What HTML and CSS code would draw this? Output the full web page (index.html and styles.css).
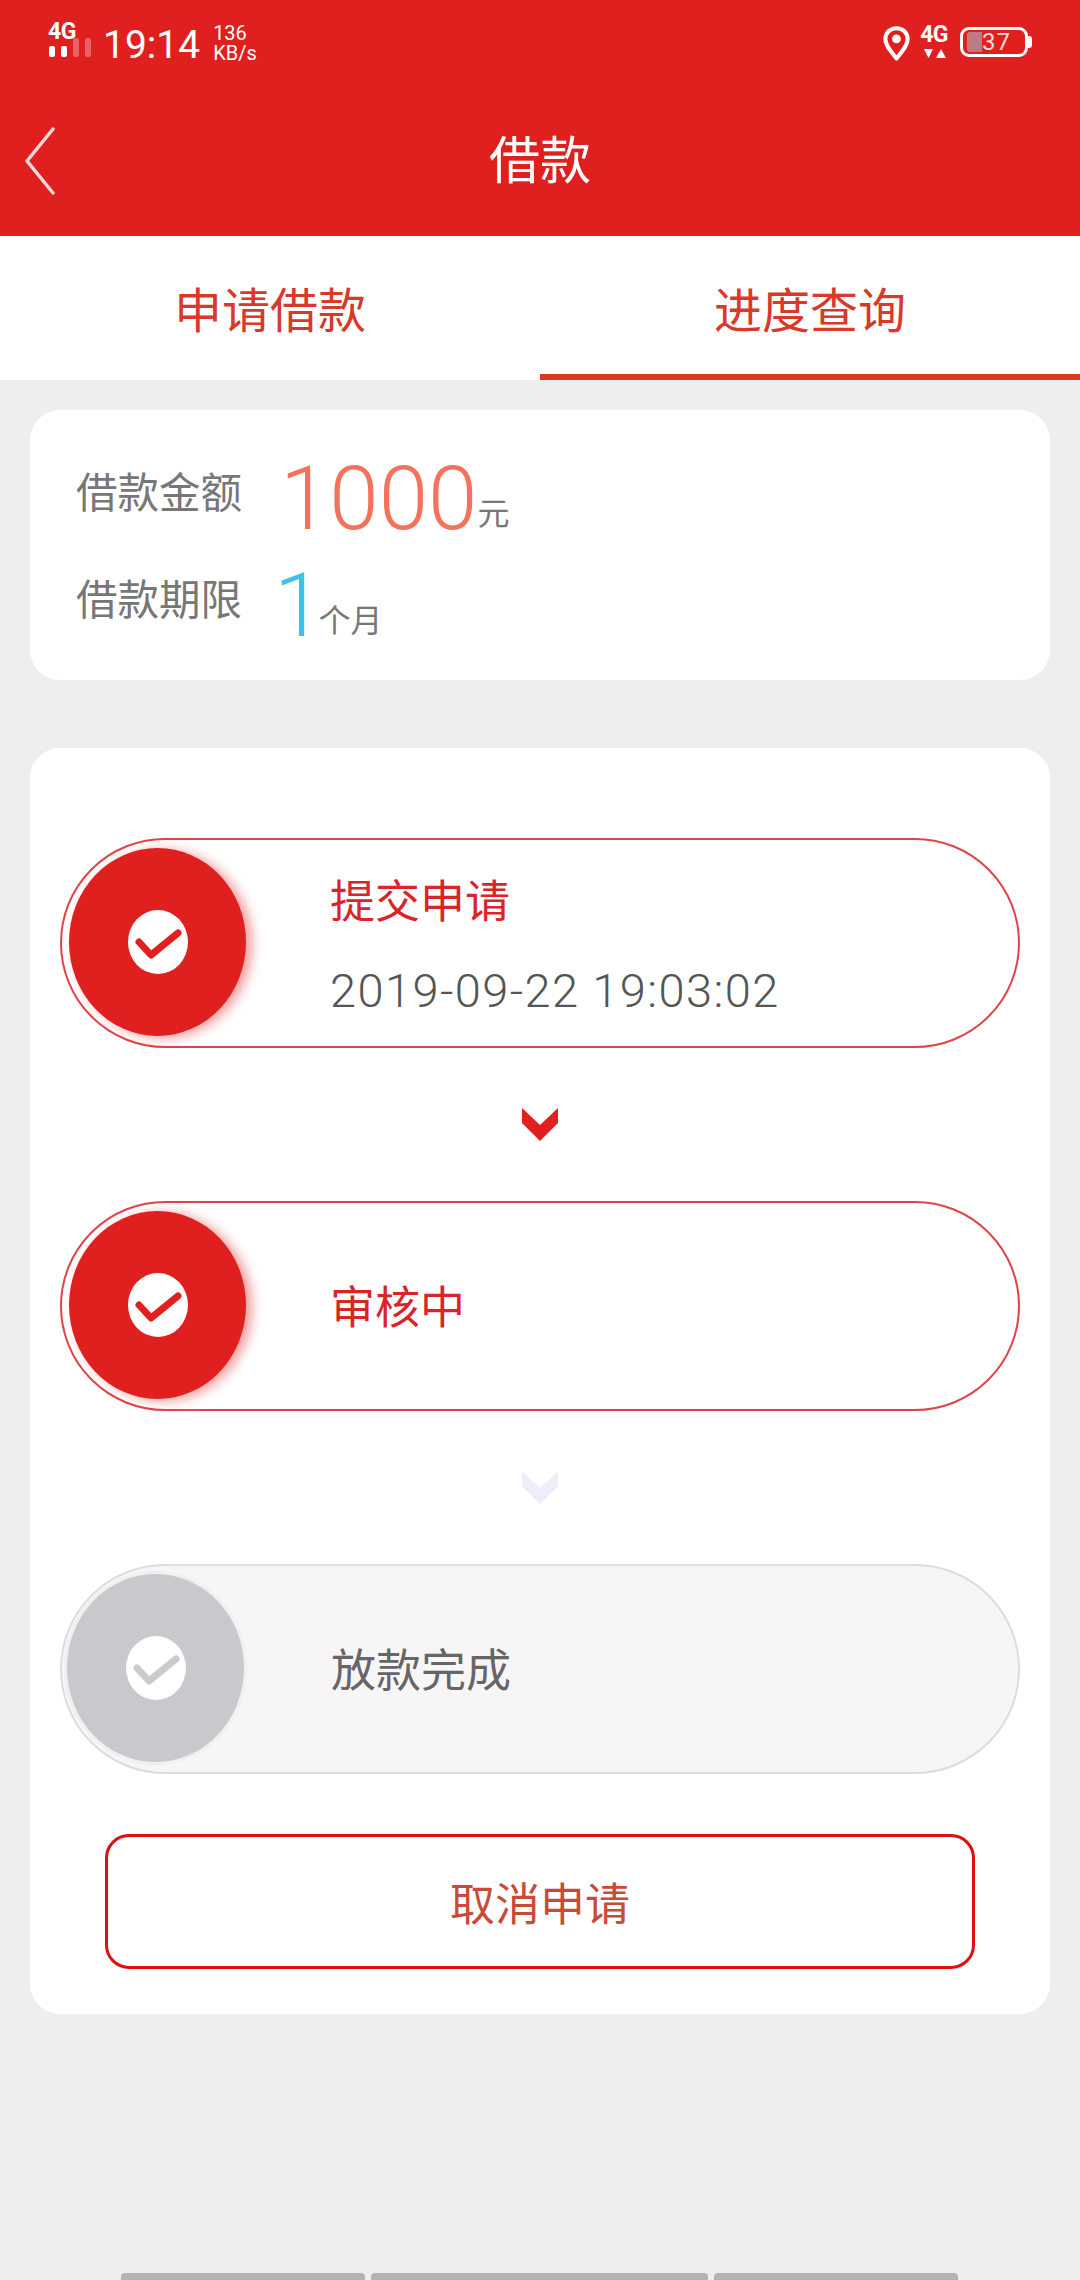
FILE: index.html
```html
<!DOCTYPE html>
<html lang="zh-CN">
<head>
    <meta charset="UTF-8">
    <meta name="viewport" content="width=device-width, initial-scale=1.0">
    <title>借款</title>
    <link rel="stylesheet" href="styles.css">
</head>
<body>
    <header class="app-header">
        <!-- Status bar -->
        <div class="status-bar">
            <div class="status-left">
                <div class="net-left">
                    <span class="net-label">4G</span>
                    <svg class="signal" width="42" height="19" viewBox="0 0 42 19">
                        <rect x="0" y="8" width="6" height="11" rx="2" fill="#fff"/>
                        <rect x="12" y="8" width="6" height="11" rx="2" fill="#fff"/>
                        <rect x="24" y="0" width="6" height="19" rx="2" fill="#fff" fill-opacity=".3"/>
                        <rect x="36" y="0" width="6" height="19" rx="2" fill="#fff" fill-opacity=".3"/>
                    </svg>
                </div>
                <span class="clock">19:14</span>
                <div class="speed">
                    <span>136</span>
                    <span>KB/s</span>
                </div>
            </div>
            <div class="status-right">
                <svg class="pin" width="27" height="35" viewBox="0 0 26 34">
                    <path d="M13 31.5C8 25 2.2 19.5 2.2 12.6 2.2 6.6 7 2.2 13 2.2s10.800 4.400 10.800 10.400C23.800 19.500 18 25 13 31.500z" fill="none" stroke="#fff" stroke-width="4" stroke-linejoin="round"/>
                    <circle cx="13" cy="12.500" r="4.300" fill="#fff"/>
                </svg>
                <div class="net-right">
                    <span class="net-label">4G</span>
                    <svg width="22" height="9" viewBox="0 0 22 9">
                        <path d="M0 0h9L4.500 9z" fill="#fff"/>
                        <path d="M12 9h10L17 0z" fill="#fff"/>
                    </svg>
                </div>
                <div class="battery">
                    <div class="battery-fill"></div>
                    <span class="battery-num">37</span>
                    <div class="battery-nub"></div>
                </div>
            </div>
        </div>

        <!-- Title -->
        <div class="title-bar">
            <svg class="back" width="30" height="68" viewBox="0 0 30 68">
                <path d="M28 2L2 34l26 32" fill="none" stroke="#f8d8d8" stroke-width="3.500" stroke-linecap="round" stroke-linejoin="round"/>
            </svg>
            <h1>借款</h1>
        </div>
    </header>

    <nav class="tabs">
        <a class="tab">申请借款</a>
        <a class="tab active">进度查询</a>
    </nav>

    <section class="card summary">
        <div class="loan-row">
            <span class="loan-label">借款金额</span>
            <div class="loan-value">
                <span class="num amount">1000</span>
                <span class="unit">元</span>
            </div>
        </div>
        <div class="loan-row">
            <span class="loan-label">借款期限</span>
            <div class="loan-value">
                <span class="num term">1</span>
                <span class="unit month">个月</span>
            </div>
        </div>
    </section>

    <section class="card progress">
        <div class="step">
            <div class="dot">
                <svg width="60" height="64" viewBox="0 0 60 64">
                    <ellipse cx="30" cy="32" rx="30" ry="32" fill="#fff"/>
                    <path d="M11 32l12 13 27-22" fill="none" stroke="#e01f1f" stroke-width="7" stroke-linecap="round" stroke-linejoin="round"/>
                </svg>
            </div>
            <div class="step-text">
                <p class="step-name">提交申请</p>
                <p class="step-time">2019-09-22 19:03:02</p>
            </div>
        </div>

        <svg class="arrow" width="36" height="33" viewBox="0 0 36 33">
            <path d="M0 0l18 17L36 0v15L18 33 0 15z" fill="#e01f1f"/>
        </svg>

        <div class="step">
            <div class="dot">
                <svg width="60" height="64" viewBox="0 0 60 64">
                    <ellipse cx="30" cy="32" rx="30" ry="32" fill="#fff"/>
                    <path d="M11 32l12 13 27-22" fill="none" stroke="#e01f1f" stroke-width="7" stroke-linecap="round" stroke-linejoin="round"/>
                </svg>
            </div>
            <div class="step-text">
                <p class="step-name">审核中</p>
            </div>
        </div>

        <svg class="arrow" width="36" height="33" viewBox="0 0 36 33">
            <path d="M0 0l18 17L36 0v15L18 33 0 15z" fill="#eeeef8"/>
        </svg>

        <div class="step pending">
            <div class="dot">
                <svg width="60" height="64" viewBox="0 0 60 64">
                    <ellipse cx="30" cy="32" rx="30" ry="32" fill="#fff"/>
                    <path d="M11 32l12 13 27-22" fill="none" stroke="#cbcbcf" stroke-width="7" stroke-linecap="round" stroke-linejoin="round"/>
                </svg>
            </div>
            <div class="step-text">
                <p class="step-name">放款完成</p>
            </div>
        </div>

        <button class="cancel-btn">取消申请</button>
    </section>

    <footer class="nav-hint">
        <span></span>
        <span class="mid"></span>
        <span></span>
    </footer>
</body>
</html>
```

FILE: styles.css
```css
*, *::before, *::after {
    margin: 0;
    padding: 0;
    box-sizing: border-box;
}

html, body {
    height: 2280px;
    overflow: hidden;
}

body {
    display: flex;
    flex-direction: column;
    background-color: #eeeeee;
    font-family: Roboto, "Noto Sans CJK SC", sans-serif;
    color: #666;
}

/* header */
.app-header {
    height: 236px;
    background-color: #e01f1f;
    color: #fff;
}

.status-bar {
    display: flex;
    justify-content: space-between;
    height: 76px;
    padding: 22px 48px 0 48px;
}

.status-left, .status-right {
    display: flex;
    align-items: flex-start;
}

.net-left, .net-right {
    display: flex;
    flex-direction: column;
}

.net-label {
    font-size: 23px;
    line-height: 20px;
    font-weight: 700;
    letter-spacing: -0.5px;
}

.signal {
    margin: -4px 0 0 1px;
}

.clock {
    margin: 0 0 0 12px;
    font-size: 39px;
    line-height: 46px;
}

.speed {
    display: flex;
    flex-direction: column;
    margin-left: 13px;
    padding-top: 1px;
    font-size: 20px;
    line-height: 20px;
}

.status-right {
    padding-top: 3px;
}

.pin {
    margin-top: 1px;
}

.net-right {
    margin-left: 10px;
}

.net-right svg {
    margin: 4px 0 0 4px;
}

.battery {
    position: relative;
    display: flex;
    align-items: center;
    width: 68px;
    height: 30px;
    margin: 2px 4px 0 12px;
    padding-left: 4px;
    border: 3px solid #fff;
    border-radius: 9px;
}

.battery-fill {
    width: 15px;
    height: 20px;
    border-radius: 3px 0 0 3px;
    background-color: #bb7c82;
}

.battery-num {
    font-size: 24px;
    line-height: 24px;
    color: #f8dede;
    letter-spacing: 1px;
}

.battery-nub {
    position: absolute;
    right: -7px;
    top: 6px;
    width: 4px;
    height: 12px;
    border-radius: 0 3px 3px 0;
    background-color: #fff;
}

.title-bar {
    position: relative;
    display: flex;
    align-items: center;
    justify-content: center;
    height: 160px;
    padding-top: 2px;
}

.back {
    position: absolute;
    left: 25px;
    top: 51px;
}

.title-bar h1 {
    font-size: 51px;
    font-weight: 400;
}

/* tabs */
.tabs {
    display: flex;
    height: 144px;
    background-color: #fff;
}

.tab {
    flex: 1;
    display: flex;
    align-items: center;
    justify-content: center;
    padding-top: 3px;
    border-bottom: 6px solid transparent;
    font-size: 48px;
    color: #d8392b;
}

.tab.active {
    border-bottom-color: #dc3a1f;
}

/* cards */
.card {
    margin: 30px 30px 0;
    background-color: #fff;
    border-radius: 30px;
}

.summary {
    height: 270px;
    padding: 35px 46px 0;
}

.loan-row {
    display: flex;
    align-items: center;
    height: 107px;
}

.loan-label {
    width: 204px;
    margin-bottom: 18px;
    font-size: 41.500px;
    color: #777;
}

.loan-value {
    display: flex;
    align-items: flex-end;
}

.num {
    font-size: 89px;
    line-height: 89px;
    font-weight: 300;
}

.amount {
    color: #f5715c;
}

.term {
    margin-left: -6px;
    color: #3cc1ec;
}

.unit {
    margin-bottom: 13px;
    font-size: 32px;
    line-height: 32px;
    color: #777;
}

.month {
    margin-left: -5px;
    font-size: 32px;
}

/* progress */
.progress {
    display: flex;
    flex-direction: column;
    align-items: center;
    margin-top: 68px;
    height: 1266px;
    padding-top: 90px;
}

.step {
    display: flex;
    align-items: center;
    width: 960px;
    height: 210px;
    flex-shrink: 0;
    padding-left: 7px;
    border: 2px solid #e0444a;
    border-radius: 105px;
    background-color: #fff;
}

.dot {
    display: flex;
    align-items: center;
    justify-content: center;
    flex-shrink: 0;
    width: 177px;
    height: 188px;
    margin-bottom: 3px;
    border-radius: 50%;
    background-color: #e01f1f;
    box-shadow: 6px 2px 12px rgba(224, 31, 31, 0.45);
}

.step-text {
    margin-left: 84px;
    padding-top: 6px;
}

.step-name {
    font-size: 45px;
    line-height: 60px;
    color: #d9242a;
}

.step-time {
    margin-top: 30px;
    font-size: 47px;
    line-height: 56px;
    font-weight: 300;
    letter-spacing: 1.400px;
    color: #555;
}

.arrow {
    margin: 60px 0;
    flex-shrink: 0;
}

.step.pending {
    padding-left: 5px;
    border-color: #dddddd;
    background-color: #f7f5f6;
}

.pending .dot {
    background-color: #c9c9cd;
    box-shadow: 0 0 0 3px #f0f0f0;
}

.pending .step-text {
    margin-left: 87px;
}

.pending .step-name {
    color: #666;
}

.cancel-btn {
    width: 870px;
    height: 135px;
    margin-top: 60px;
    flex-shrink: 0;
    border: 3px solid #dc1010;
    border-radius: 24px;
    background-color: #fff;
    font-family: inherit;
    font-size: 45px;
    color: #c94a38;
}

/* bottom bars */
.nav-hint {
    display: flex;
    gap: 6px;
    margin: auto 122px 0 121px;
    height: 7px;
}

.nav-hint span {
    flex: 244;
    border-radius: 4px 4px 0 0;
    background-color: #b3b3b3;
}

.nav-hint .mid {
    flex: 338;
}
```
